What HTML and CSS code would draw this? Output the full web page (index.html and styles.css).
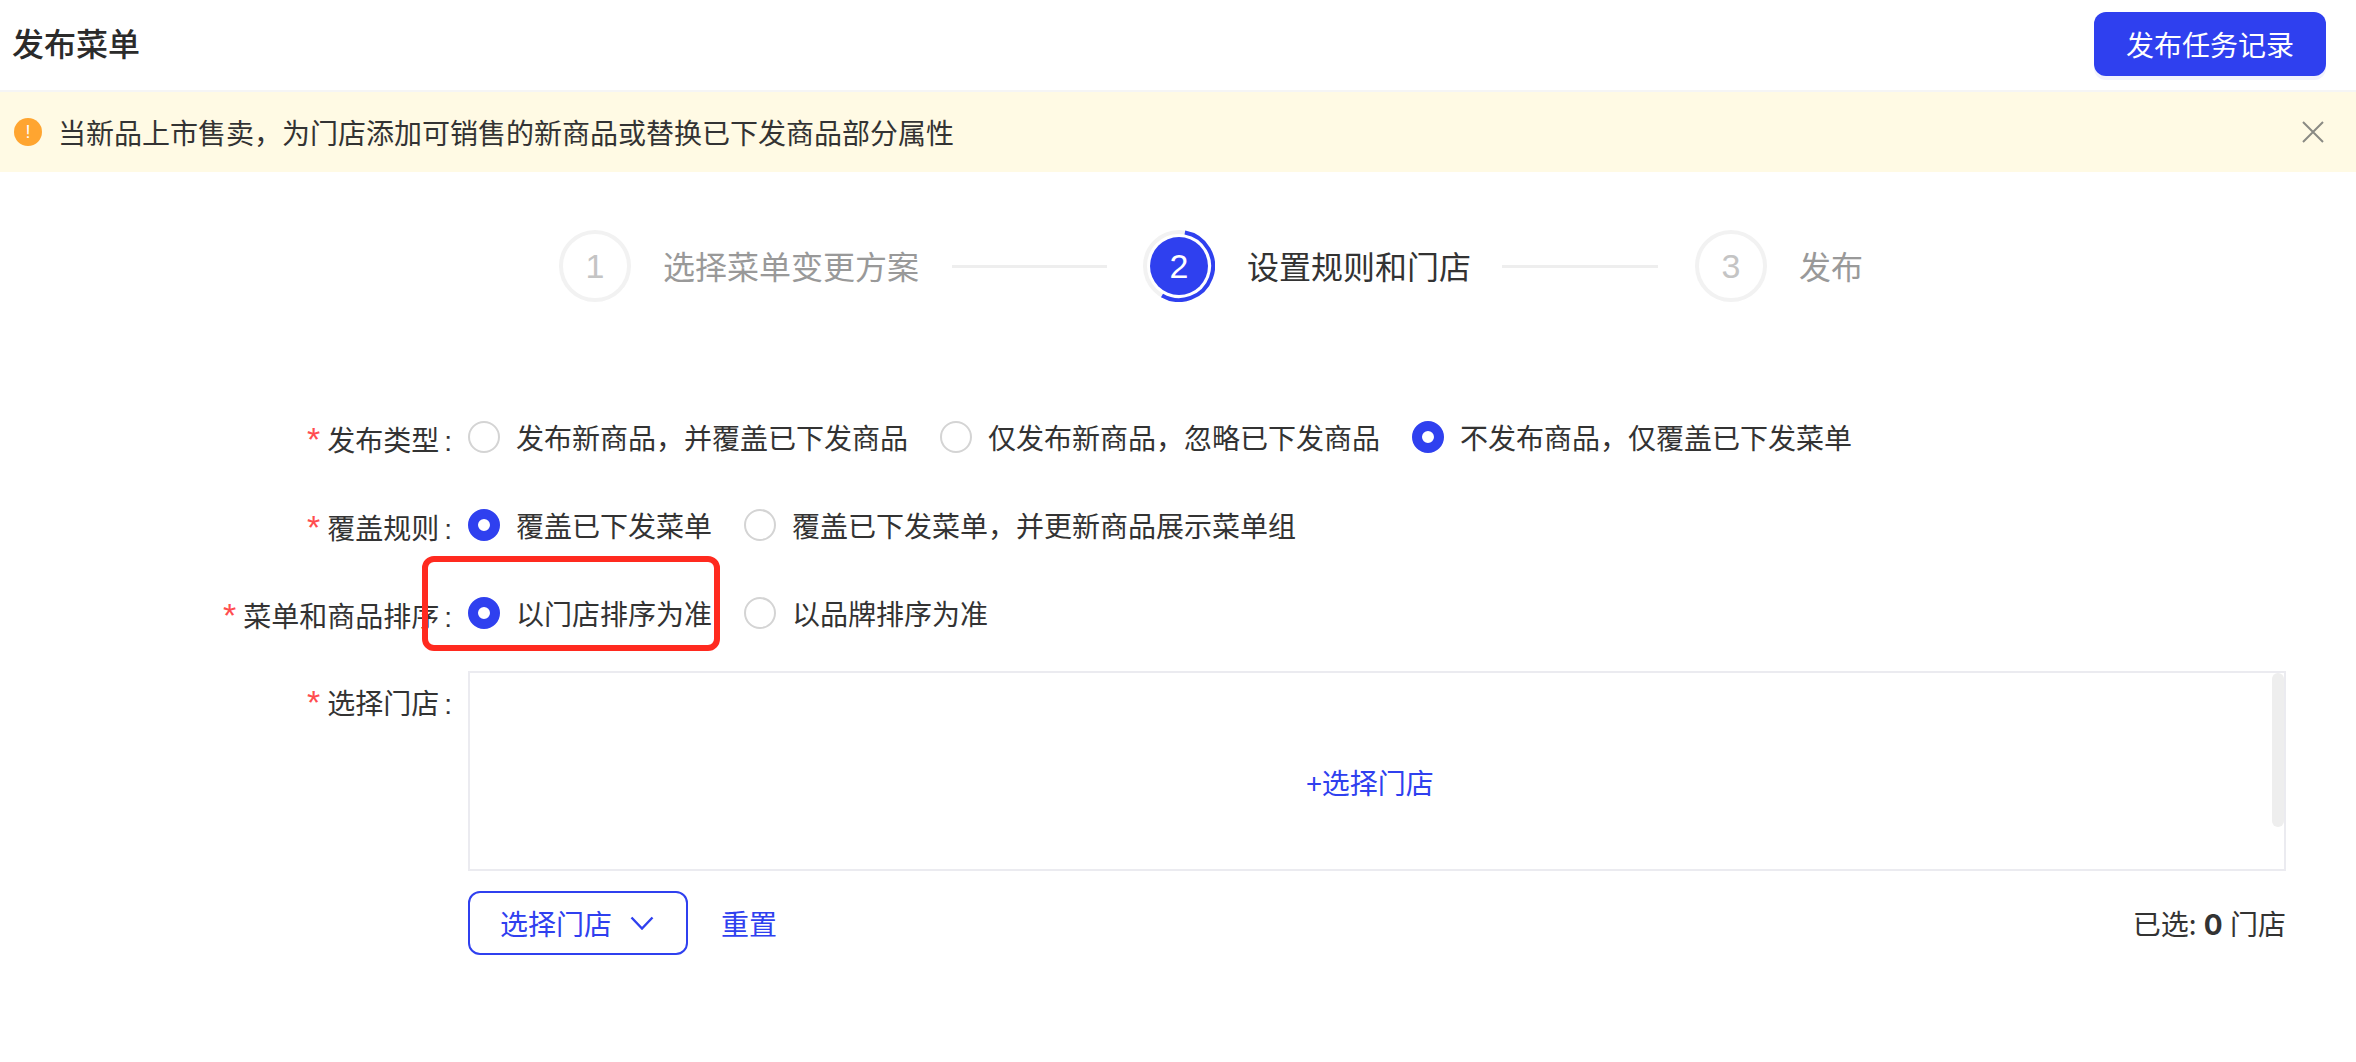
FILE: index.html
```html
<!DOCTYPE html>
<html lang="zh-CN">
<head>
<meta charset="utf-8">
<title>发布菜单</title>
<link rel="stylesheet" href="styles.css">
</head>
<body>
<header class="header">
  <h1 class="title">发布菜单</h1>
  <button class="primary-btn">发布任务记录</button>
</header>
<div class="notice">
  <span class="notice-icon">!</span>
  <span class="notice-text">当新品上市售卖，为门店添加可销售的新商品或替换已下发商品部分属性</span>
  <svg class="notice-close" viewBox="0 0 22 22"><path d="M1 1 21 21M21 1 1 21"/></svg>
</div>
<div class="steps">
  <div class="step-icon">1</div>
  <div class="step-text">选择菜单变更方案</div>
  <div class="step-line line-a"></div>
  <div class="step-icon current">
    <svg class="step-arc" viewBox="0 0 72 72"><path d="M41.9 2.5A34 34 0 1 1 19 65.4"/></svg>
    <span class="step-dot">2</span>
  </div>
  <div class="step-text active">设置规则和门店</div>
  <div class="step-line line-b"></div>
  <div class="step-icon">3</div>
  <div class="step-text">发布</div>
</div>
<form class="form">
  <div class="row">
    <div class="label"><span class="star">*</span>发布类型<span class="colon">:</span></div>
    <div class="options">
      <label class="option"><span class="radio"></span>发布新商品，并覆盖已下发商品</label>
      <label class="option"><span class="radio"></span>仅发布新商品，忽略已下发商品</label>
      <label class="option"><span class="radio on"></span>不发布商品，仅覆盖已下发菜单</label>
    </div>
  </div>
  <div class="row">
    <div class="label"><span class="star">*</span>覆盖规则<span class="colon">:</span></div>
    <div class="options">
      <label class="option"><span class="radio on"></span>覆盖已下发菜单</label>
      <label class="option"><span class="radio"></span>覆盖已下发菜单，并更新商品展示菜单组</label>
    </div>
  </div>
  <div class="row">
    <div class="label"><span class="star">*</span>菜单和商品排序<span class="colon">:</span></div>
    <div class="options">
      <label class="option"><span class="radio on"></span>以门店排序为准</label>
      <label class="option"><span class="radio"></span>以品牌排序为准</label>
      <div class="highlight"></div>
    </div>
  </div>
  <div class="row store-row">
    <div class="label store-label"><span class="star">*</span>选择门店<span class="colon">:</span></div>
    <div class="store-col">
      <div class="store-box">
        <a class="store-add">+选择门店</a>
        <div class="scroll-thumb"></div>
      </div>
      <div class="toolbar">
        <button type="button" class="outline-btn">选择门店
          <svg class="chevron" viewBox="0 0 24 14"><path d="M1.5 1.5 12 12.5 22.5 1.5"/></svg>
        </button>
        <a class="reset">重置</a>
        <div class="count">已选: <b>0</b> 门店</div>
      </div>
    </div>
  </div>
</form>
</body>
</html>
```

FILE: styles.css
```css
* { box-sizing: border-box; }
html, body { margin: 0; padding: 0; background: #fff; }
body {
  font-family: "Noto Sans CJK SC", "Liberation Sans", sans-serif;
  font-size: 28px;
  color: #333;
  overflow: hidden;
}
.header {
  height: 92px;
  display: flex;
  align-items: flex-start;
  justify-content: space-between;
  padding: 12px 30px 0 12px;
  border-bottom: 2px solid #f5f5f5;
}
.title {
  margin: 0;
  font-size: 32px;
  font-weight: 500;
  line-height: 60px;
  color: #2b2b2b;
}
.primary-btn {
  width: 232px;
  height: 64px;
  border: 0;
  border-radius: 12px;
  background: #2f40ef;
  box-shadow: 0 4px 0 #f1f2fd;
  color: #fff;
  font: inherit;
  font-size: 28px;
  padding: 0;
}
.notice {
  height: 80px;
  display: flex;
  align-items: center;
  padding: 0 32px 0 14px;
  background: #fffae4;
}
.notice-icon {
  width: 28px;
  height: 28px;
  border-radius: 50%;
  background: #ffa530;
  color: #fff;
  font-family: "Liberation Sans", sans-serif;
  font-size: 18px;
  line-height: 28px;
  text-align: center;
  margin-right: 16px;
}
.notice-text { flex: 1; color: #333; line-height: 40px; }
.notice-close { width: 22px; height: 22px; }
.notice-close path { fill: none; stroke: #8a8a84; stroke-width: 2; }
.steps {
  display: flex;
  align-items: center;
  height: 72px;
  margin-top: 58px;
  padding-left: 559px;
}
.step-icon {
  position: relative;
  width: 72px;
  height: 72px;
  border: 4px solid #f2f2f2;
  border-radius: 50%;
  display: flex;
  align-items: center;
  justify-content: center;
  font-family: "Liberation Sans", sans-serif;
  font-size: 34px;
  font-weight: 400;
  color: #c4c4c4;
  flex: none;
}
.step-text {
  margin-left: 32px;
  padding-bottom: 2px;
  font-size: 32px;
  line-height: 48px;
  color: #999;
  white-space: nowrap;
}
.step-text.active { color: #333; }
.step-line { height: 3px; background: #eee; flex: none; }
.line-a { width: 155px; margin: 0 36px 0 33px; }
.line-b { width: 156px; margin: 0 37px 0 31px; }
.step-arc {
  position: absolute;
  left: -4px;
  top: -4px;
  width: 72px;
  height: 72px;
}
.step-arc path { fill: none; stroke: #2f40ef; stroke-width: 4; }
.step-dot {
  width: 58px;
  height: 58px;
  border-radius: 50%;
  background: #2f40ef;
  color: #fff;
  text-align: center;
  line-height: 58px;
}
.form {
  display: flex;
  flex-direction: column;
  gap: 48px;
  margin-top: 115px;
  padding-right: 70px;
}
.row {
  display: grid;
  grid-template-columns: 452px 1fr;
  column-gap: 16px;
}
.label {
  text-align: right;
  height: 40px;
  padding-top: 2px;
  line-height: 40px;
  white-space: nowrap;
}
.star {
  color: #ff4d4f;
  margin-right: 7px;
  font-family: "Liberation Sans", sans-serif;
  font-size: 34px;
  line-height: 1;
}
.colon { margin-left: 5px; font-family: "Liberation Sans", sans-serif; }
.options {
  position: relative;
  display: flex;
  gap: 32px;
  height: 40px;
}
.option {
  display: flex;
  align-items: center;
  gap: 16px;
  line-height: 40px;
  white-space: nowrap;
}
.radio {
  width: 32px;
  height: 32px;
  border: 2px solid #d4d4d4;
  border-radius: 50%;
  background: #fff;
  flex: none;
}
.radio.on {
  border: 10px solid #2f40ef;
}
.highlight {
  position: absolute;
  left: -46px;
  top: -37px;
  width: 298px;
  height: 95px;
  border: 6px solid #ff2a1f;
  border-radius: 12px;
}
.store-row { margin-top: -10px; }
.store-label { padding-top: 11px; height: auto; }
.store-col { display: flex; flex-direction: column; gap: 20px; }
.store-box {
  position: relative;
  height: 200px;
  border: 2px solid #ebebf0;
  display: flex;
  align-items: center;
  justify-content: center;
  padding: 21px 14px 0 0;
}
.store-add { color: #2f40ef; }
.scroll-thumb {
  position: absolute;
  right: 0;
  top: 0;
  width: 12px;
  height: 154px;
  border-radius: 6px;
  background: #eee;
}
.toolbar { display: flex; align-items: center; }
.outline-btn {
  width: 220px;
  height: 64px;
  border: 2px solid #2f40ef;
  border-radius: 12px;
  background: #fff;
  color: #2f40ef;
  font: inherit;
  display: flex;
  align-items: center;
  padding: 0 0 0 30px;
}
.chevron { width: 24px; height: 14px; margin-left: 18px; }
.chevron path { fill: none; stroke: #2f40ef; stroke-width: 2.4; }
.reset { color: #2f40ef; margin-left: 33px; }
.count { margin-left: auto; }
.count b { font-family: "Inter", "Liberation Sans", sans-serif; margin: 0 1px; }
```
